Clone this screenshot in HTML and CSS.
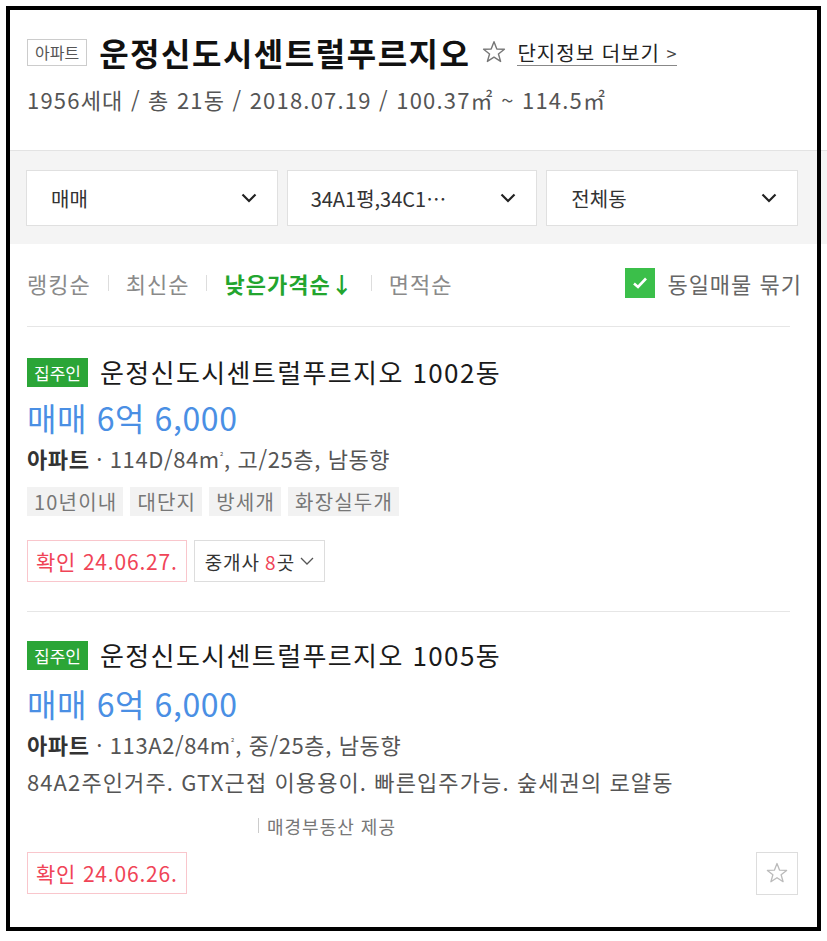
FILE: index.html
```html
<!DOCTYPE html>
<html lang="ko">
<head>
<meta charset="UTF-8">
<title>운정신도시센트럴푸르지오</title>
<link rel="stylesheet" href="styles.css">
</head>
<body>
<div class="frame">
  <div class="header">
    <div class="title-row">
      <span class="type-tag">아파트</span>
      <h1>운정신도시센트럴푸르지오</h1>
      <svg class="star" width="26" height="26" viewBox="0 0 24 24"><polygon points="12,2.5 14.6,9.2 21.6,9.4 16.1,13.8 18.1,20.7 12,16.7 5.9,20.7 7.9,13.8 2.4,9.4 9.4,9.2" fill="none" stroke="#777" stroke-width="1.3" stroke-linejoin="round"/></svg>
      <a class="more">단지정보 더보기 <span class="gt">&gt;</span></a>
    </div>
    <div class="sub">1956세대 / 총 21동 / 2018.07.19 / 100.37㎡ ~ 114.5㎡</div>
  </div>

  <div class="filters">
    <div class="select"><span>매매</span><svg width="16" height="10" viewBox="0 0 16 10"><polyline points="1.5,1.5 8,8 14.5,1.5" fill="none" stroke="#222" stroke-width="2.2"/></svg></div>
    <div class="select"><span>34A1평,34C1…</span><svg width="16" height="10" viewBox="0 0 16 10"><polyline points="1.5,1.5 8,8 14.5,1.5" fill="none" stroke="#222" stroke-width="2.2"/></svg></div>
    <div class="select"><span>전체동</span><svg width="16" height="10" viewBox="0 0 16 10"><polyline points="1.5,1.5 8,8 14.5,1.5" fill="none" stroke="#222" stroke-width="2.2"/></svg></div>
  </div>

  <div class="sort">
    <div class="sort-list">
      <span>랭킹순</span><i class="bar"></i>
      <span>최신순</span><i class="bar"></i>
      <span class="on">낮은가격순↓</span><i class="bar"></i>
      <span>면적순</span>
    </div>
    <label class="group">
      <span class="check"><svg width="16" height="14" viewBox="0 0 16 14"><polyline points="2,7.5 6,11 14,2.5" fill="none" stroke="#fff" stroke-width="2.6"/></svg></span>
      동일매물 묶기
    </label>
  </div>

  <div class="item">
    <div class="item-title"><span class="owner">집주인</span>운정신도시센트럴푸르지오 1002동</div>
    <div class="price">매매 6억 6,000</div>
    <div class="info"><b>아파트</b> · 114D/84m<sup>²</sup>, 고/25층, 남동향</div>
    <div class="tags">
      <span>10년이내</span><span>대단지</span><span>방세개</span><span>화장실두개</span>
    </div>
    <div class="actions">
      <span class="confirm">확인 24.06.27.</span>
      <span class="agents">중개사 <em>8</em>곳 <svg width="14" height="8" viewBox="0 0 14 8"><polyline points="1,1 7,7 13,1" fill="none" stroke="#555" stroke-width="1.3"/></svg></span>
    </div>
  </div>

  <div class="item last">
    <div class="item-title"><span class="owner">집주인</span>운정신도시센트럴푸르지오 1005동</div>
    <div class="price">매매 6억 6,000</div>
    <div class="info"><b>아파트</b> · 113A2/84m<sup>²</sup>, 중/25층, 남동향</div>
    <div class="desc">84A2주인거주. GTX근접 이용용이. 빠른입주가능. 숲세권의 로얄동</div>
    <div class="provider"><i class="bar"></i>매경부동산 제공</div>
    <div class="actions spread">
      <span class="confirm">확인 24.06.26.</span>
      <span class="fav"><svg width="24" height="24" viewBox="0 0 24 24"><polygon points="12,2.5 14.6,9.2 21.6,9.4 16.1,13.8 18.1,20.7 12,16.7 5.9,20.7 7.9,13.8 2.4,9.4 9.4,9.2" fill="none" stroke="#bbb" stroke-width="1.3" stroke-linejoin="round"/></svg></span>
    </div>
  </div>
</div>
</body>
</html>
```

FILE: styles.css
```css
body {
  margin: 0;
  font-family: "Noto Sans CJK KR", "Noto Sans", sans-serif;
  color: #222;
  background: #fff;
}
.frame {
  position: relative;
  margin: 6px 6px 0 6px;
  height: 925px;
  box-sizing: border-box;
  padding: 4px;
}
.frame::after {
  content: "";
  position: absolute;
  inset: 0;
  border: 4px solid #000;
  pointer-events: none;
}

.header {
  height: 140px;
  box-sizing: border-box;
  padding: 27px 17px 0;
}
.title-row {
  display: flex;
  align-items: center;
  height: 30px;
}
.type-tag {
  font-size: 16px;
  line-height: 25px;
  padding: 0 7px;
  border: 1px solid #ccc;
  color: #555;
  margin-right: 12px;
}
.header h1 {
  margin: 0;
  font-size: 32px;
  line-height: 30px;
  font-weight: bold;
  letter-spacing: 1.5px;
  color: #111;
}
.star {
  margin: 0 10px 0 11px;
}
.more {
  font-size: 20px;
  line-height: 24px;
  color: #222;
  border-bottom: 1px solid #888;
  letter-spacing: 1px;
  padding-top: 2px;
}
.more .gt {
  font-size: 18px;
  color: #444;
}
.sub {
  margin-top: 20px;
  font-size: 22px;
  line-height: 24px;
  color: #555;
  letter-spacing: 1.2px;
}

.filters {
  display: flex;
  gap: 9px;
  margin-right: -11px;
  padding: 19px 30px 18px 16px;
  background: #f4f4f4;
  border-top: 1px solid #e3e3e3;
}
.select {
  flex: 1;
  height: 56px;
  box-sizing: border-box;
  background: #fff;
  border: 1px solid #e0e0e0;
  display: flex;
  align-items: center;
  justify-content: space-between;
  padding: 0 20px 0 24px;
  font-size: 20px;
  color: #333;
}
.select:nth-child(2) {
  padding-left: 23px;
}

.sort {
  height: 83px;
  margin: 0 27px 0 17px;
  border-bottom: 1px solid #e6e6e6;
  display: flex;
  align-items: center;
  justify-content: space-between;
  padding-bottom: 5px;
  box-sizing: border-box;
}
.sort-list {
  display: flex;
  align-items: center;
  font-size: 22px;
  letter-spacing: 1px;
  color: #8a8a8a;
}
.sort-list .on {
  color: #23a52e;
  font-weight: bold;
}
.bar {
  display: inline-block;
  width: 1px;
  height: 16px;
  background: #ddd;
  margin: 0 17px;
}
.group {
  display: flex;
  align-items: center;
  font-size: 22px;
  letter-spacing: 1px;
  color: #666;
  margin-right: -12px;
}
.check {
  width: 30px;
  height: 30px;
  background: #3bbf4a;
  display: flex;
  align-items: center;
  justify-content: center;
  margin-right: 12px;
}

.item {
  margin: 0 27px 0 17px;
  padding: 30px 0 29px;
  border-bottom: 1px solid #e6e6e6;
}
.item.last {
  border-bottom: none;
  padding-top: 28px;
}
.item-title {
  display: flex;
  align-items: center;
  font-size: 26px;
  line-height: 30px;
  color: #1a1a1a;
  letter-spacing: 1.4px;
}
.owner {
  background: #2ba537;
  color: #fff;
  font-size: 17px;
  line-height: 29px;
  padding: 0 7px;
  margin-right: 12px;
  letter-spacing: 0;
}
.price {
  margin-top: 12px;
  font-size: 32px;
  line-height: 36px;
  letter-spacing: 0.6px;
  color: #4a8fe4;
}
.last .price {
  margin-top: 15px;
}
.info {
  margin-top: 8px;
  font-size: 22px;
  line-height: 28px;
  letter-spacing: 0.6px;
  color: #555;
}
.info b {
  color: #333;
}
.info sup {
  font-size: 9px;
}
.tags {
  display: flex;
  gap: 7px;
  margin-top: 15px;
}
.tags span {
  background: #f2f2f2;
  color: #777;
  font-size: 20px;
  letter-spacing: 1.2px;
  line-height: 29px;
  padding: 0 6px 0 7px;
}
.actions {
  display: flex;
  gap: 7px;
  margin-top: 24px;
}
.actions.spread {
  justify-content: space-between;
  margin-top: 14px;
  margin-right: -8px;
}
.confirm {
  height: 42px;
  box-sizing: border-box;
  border: 1px solid #f9c6cc;
  color: #f04457;
  font-size: 21px;
  letter-spacing: 0.8px;
  display: flex;
  align-items: center;
  padding: 0 8px;
}
.agents {
  height: 42px;
  box-sizing: border-box;
  border: 1px solid #ddd;
  color: #333;
  font-size: 19px;
  letter-spacing: 1px;
  display: flex;
  align-items: center;
  gap: 5px;
  padding: 0 10px;
}
.agents em {
  font-style: normal;
  color: #f04457;
  margin: 0 -5px 0 0;
}
.fav {
  width: 42px;
  height: 43px;
  box-sizing: border-box;
  border: 1px solid #ddd;
  display: flex;
  align-items: center;
  justify-content: center;
}
.desc {
  margin-top: 8px;
  font-size: 22px;
  line-height: 28px;
  letter-spacing: 1.1px;
  color: #555;
}
.provider {
  display: flex;
  align-items: center;
  margin-top: 19px;
  padding-left: 213px;
  font-size: 18px;
  letter-spacing: 1px;
  line-height: 24px;
  color: #777;
}
.provider .bar {
  margin: 0 8px 0 18px;
  height: 15px;
  background: #ccc;
}
```
